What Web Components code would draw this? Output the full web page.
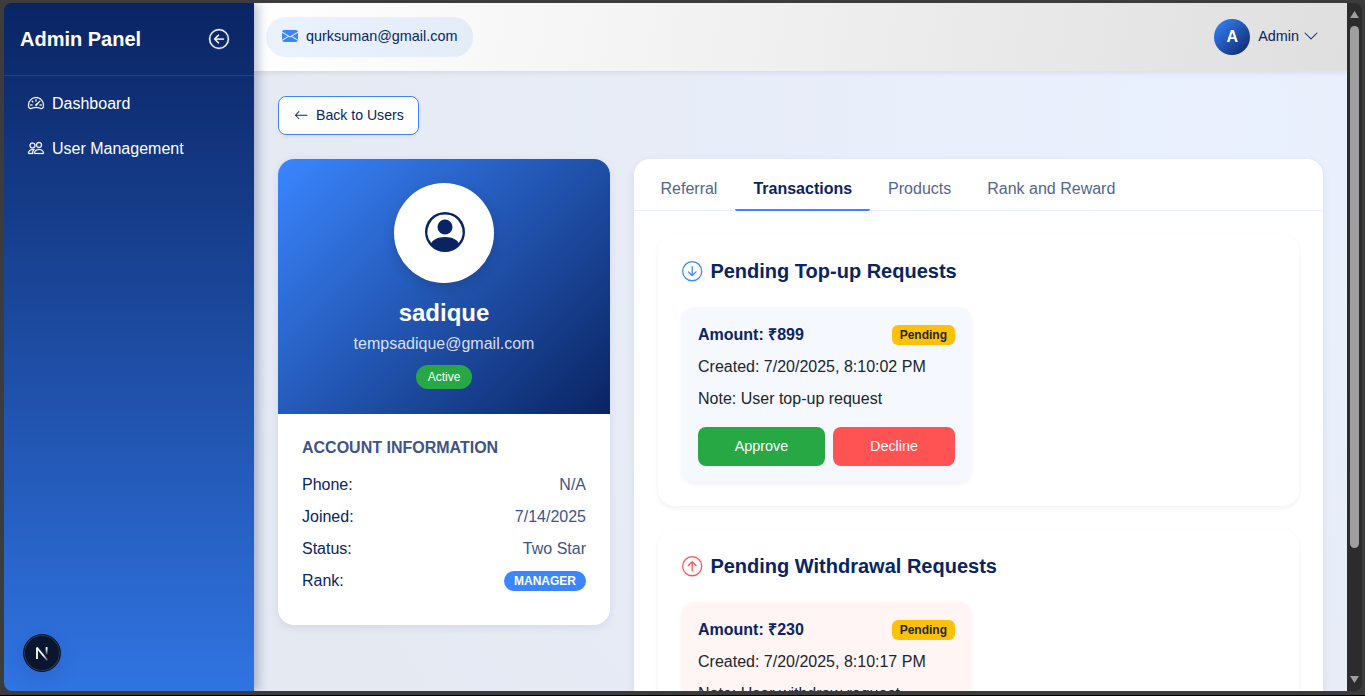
<!DOCTYPE html>
<html lang="en">
<head>
<meta charset="utf-8">
<title>Admin Panel</title>
<style>
html,body{margin:0;height:100%;overflow:hidden;background:#3c3c3c}
body{font:16px/24px "Liberation Sans",Arial,sans-serif;color:#212529}
</style>
</head>
<body>
<admin-app></admin-app>
<script>
const ICONS = {
  back: '<path fill-rule="evenodd" d="M1 8a7 7 0 1 0 14 0A7 7 0 0 0 1 8m15 0A8 8 0 1 1 0 8a8 8 0 0 1 16 0m-4.500-.5a.5.5 0 0 1 0 1H5.707l2.147 2.146a.5.5 0 0 1-.708.708l-3-3a.5.5 0 0 1 0-.708l3-3a.5.5 0 1 1 .708.708L5.707 7.500z" stroke="currentColor" stroke-width=".25"/>',
  gauge: '<path d="M8 4a.5.5 0 0 1 .5.5V6a.5.5 0 0 1-1 0V4.500A.5.5 0 0 1 8 4M3.732 5.732a.5.5 0 0 1 .707 0l.915.914a.5.5 0 1 1-.708.708l-.914-.915a.5.5 0 0 1 0-.707M2 10a.5.5 0 0 1 .5-.5h1.586a.5.5 0 0 1 0 1H2.500A.5.5 0 0 1 2 10m9.500 0a.5.5 0 0 1 .5-.5h1.500a.5.5 0 0 1 0 1H12a.5.5 0 0 1-.5-.5m.754-4.246a.39.39 0 0 0-.527-.02L7.547 9.310a.91.91 0 1 0 1.302 1.258l3.434-4.297a.39.39 0 0 0-.029-.518z" stroke="currentColor" stroke-width=".25"/><path fill-rule="evenodd" d="M0 10a8 8 0 1 1 15.547 2.661c-.442 1.253-1.845 1.602-2.932 1.250C11.309 13.488 9.475 13 8 13c-1.474 0-3.310.488-4.615.911-1.087.352-2.490.003-2.932-1.250A8 8 0 0 1 0 10m8-7a7 7 0 0 0-6.603 9.329c.203.575.923.876 1.680.63C4.397 12.533 6.358 12 8 12s3.604.532 4.923.96c.757.245 1.477-.056 1.680-.631A7 7 0 0 0 8 3" stroke="currentColor" stroke-width=".25"/>',
  people: '<path d="M15 14s1 0 1-1-1-4-5-4-5 3-5 4 1 1 1 1zm-7.978-1L7 12.996c.001-.264.167-1.030.76-1.720C8.312 10.629 9.282 10 11 10c1.717 0 2.687.63 3.240 1.276.593.69.758 1.457.76 1.720l-.008.002-.014.002zM11 7a2 2 0 1 0 0-4 2 2 0 0 0 0 4m3-2a3 3 0 1 1-6 0 3 3 0 0 1 6 0M6.936 9.280a6 6 0 0 0-1.230-.247A7 7 0 0 0 5 9c-4 0-5 3-5 4q0 1 1 1h4.216A2.240 2.240 0 0 1 5 13c0-1.010.377-2.042 1.090-2.904.243-.294.526-.569.846-.816M4.920 10A5.500 5.500 0 0 0 4 13H1c0-.26.164-1.030.76-1.724.545-.636 1.492-1.256 3.160-1.275ZM1.500 5.500a3 3 0 1 1 6 0 3 3 0 0 1-6 0m3-2a2 2 0 1 0 0 4 2 2 0 0 0 0-4" stroke="currentColor" stroke-width=".25"/>',
  mail: '<path d="M.05 3.555A2 2 0 0 1 2 2h12a2 2 0 0 1 1.950 1.555L8 8.414zM0 4.697v7.104l5.803-3.558zM6.761 8.830l-6.570 4.027A2 2 0 0 0 2 14h12a2 2 0 0 0 1.808-1.144l-6.570-4.027L8 9.586zm3.436-.586L16 11.801V4.697z"/>',
  left: '<path fill-rule="evenodd" d="M15 8a.5.5 0 0 0-.5-.5H2.707l3.147-3.146a.5.5 0 1 0-.708-.708l-4 4a.5.5 0 0 0 0 .708l4 4a.5.5 0 0 0 .708-.708L2.707 8.500H14.500A.5.5 0 0 0 15 8"/>',
  chevron: '<path fill-rule="evenodd" d="M1.646 4.646a.5.5 0 0 1 .708 0L8 10.293l5.646-5.647a.5.5 0 0 1 .708.708l-6 6a.5.5 0 0 1-.708 0l-6-6a.5.5 0 0 1 0-.708"/>',
  person: '<path d="M11 6a3 3 0 1 1-6 0 3 3 0 0 1 6 0"/><path fill-rule="evenodd" d="M0 8a8 8 0 1 1 16 0A8 8 0 0 1 0 8m8-7a7 7 0 0 0-5.468 11.370C3.242 11.226 4.805 10 8 10s4.757 1.225 5.468 2.370A7 7 0 0 0 8 1"/>',
  down: '<path fill-rule="evenodd" d="M1 8a7 7 0 1 0 14 0A7 7 0 0 0 1 8m15 0A8 8 0 1 1 0 8a8 8 0 0 1 16 0M8.500 4.500a.5.5 0 0 0-1 0v5.793L5.354 8.146a.5.5 0 1 0-.708.708l3 3a.5.5 0 0 0 .708 0l3-3a.5.5 0 0 0-.708-.708L8.500 10.293z"/>',
  up: '<path fill-rule="evenodd" d="M1 8a7 7 0 1 0 14 0A7 7 0 0 0 1 8m15 0A8 8 0 1 1 0 8a8 8 0 0 1 16 0m-7.500 3.500a.5.5 0 0 1-1 0V5.707L5.354 7.854a.5.5 0 1 1-.708-.708l3-3a.5.5 0 0 1 .708 0l3 3a.5.5 0 0 1-.708.708L8.500 5.707z"/>'
};

function define(name, html) {
  customElements.define(name, class extends HTMLElement {
    constructor() {
      super();
      const t = document.createElement('template');
      t.innerHTML = typeof html === 'function' ? html(this) : html;
      this.attachShadow({ mode: 'open' }).append(t.content.cloneNode(true));
    }
  });
}

define('ui-icon', el => `<style>:host{display:block;flex:none;width:var(--size,16px);height:var(--size,16px)}svg{display:block;width:100%;height:100%;overflow:visible}</style>
<svg viewBox="0 0 16 16" fill="currentColor">${ICONS[el.getAttribute('name')]}</svg>`);

define('nav-item', el => `<style>
:host{display:flex;align-items:center;gap:8px;height:45px;padding-left:24px;color:#fff}ui-icon{margin-bottom:1px}</style>
<ui-icon name="${el.getAttribute('icon')}"></ui-icon><slot></slot>`);

define('side-bar', `<style>
:host{display:flex;flex-direction:column;width:250px;flex:none;box-sizing:border-box;background:linear-gradient(#0a2463,#3074e2);color:#fff;box-shadow:4px 0 10px rgba(10,36,99,.3);z-index:2;position:relative}
header{display:flex;align-items:center;justify-content:space-between;height:72px;padding:0 25px 0 16px;border-bottom:1px solid rgba(255,255,255,.1)}
h1{margin:0;font-size:20px;line-height:24px}
nav{padding-top:5px}
dev-badge{position:absolute;left:19px;bottom:19px}
</style>
<header><h1>Admin Panel</h1><ui-icon name="back" style="--size:20px"></ui-icon></header>
<nav><nav-item icon="gauge">Dashboard</nav-item><nav-item icon="people">User Management</nav-item></nav>
<dev-badge></dev-badge>`);

define('dev-badge', `<style>
:host{display:flex;width:38px;height:38px;border-radius:50%;box-sizing:border-box;align-items:center;justify-content:center;background:#0a162f;border:1px solid #08152f;box-shadow:inset 0 0 0 1px #2c3a54,0 8px 20px rgba(10,36,99,.12)}</style>
<svg width="14" height="16" viewBox="0 0 14 16" fill="none" stroke-width="1.8"><defs><linearGradient id="a" x1="0" y1="0" x2="0" y2="1"><stop offset=".2" stop-color="#fff"/><stop offset="1" stop-color="#fff" stop-opacity="0"/></linearGradient><linearGradient id="b" x1="0" y1="0" x2="1" y2="1"><stop offset=".6" stop-color="#fff"/><stop offset="1" stop-color="#fff" stop-opacity=".3"/></linearGradient></defs><path d="M2 14V2.600" stroke="#fff"/><path d="M1.900 2.600 12.300 15.200" stroke="url(#b)"/><rect x="10.700" y="2" width="1.800" height="8.500" fill="url(#a)"/></svg>`);

define('top-bar', `<style>
:host{display:flex;align-items:center;justify-content:space-between;height:68px;flex:none;box-sizing:border-box;padding:0 28px 0 12px;background:linear-gradient(100deg,#fff,#dfdfdf);box-shadow:0 2px 5px rgba(0,0,0,.08);position:relative;z-index:1;font-size:14.400px;color:#0a2463}
.mail{display:flex;align-items:center;gap:8px;height:40px;padding:0 16px;border-radius:20px;background:linear-gradient(90deg,#e9f2fe,#e4ecf8)}
.mail ui-icon{color:#3a86ff;margin-bottom:2px}
.user{display:flex;align-items:center;gap:8px}
.user ui-icon{margin:0 0 2px -4px}
.av{width:36px;height:36px;border-radius:50%;background:linear-gradient(135deg,#3a86ff,#0a2463);color:#fff;font:bold 16px/36px "Liberation Sans",Arial,sans-serif;text-align:center}
.t{position:relative;top:-1px}
</style>
<div class="mail"><ui-icon name="mail"></ui-icon><span class="t">qurksuman@gmail.com</span></div>
<div class="user"><div class="av">A</div><span class="t">Admin</span><ui-icon name="chevron"></ui-icon></div>`);

define('back-button', `<style>
:host{display:flex;align-items:center;gap:7.600px;width:141px;height:39px;box-sizing:border-box;padding:0 0 1px 15px;white-space:nowrap;border:1px solid #3a86ff;border-radius:8px;background:#fff;color:#0a2463;font-size:14.100px;box-shadow:0 2px 5px rgba(0,0,0,.04)}
ui-icon{margin-top:1px}</style>
<ui-icon name="left" style="--size:14.400px"></ui-icon><slot></slot>`);

define('info-row', `<style>:host{display:flex;justify-content:space-between;align-items:center;height:24px;margin-bottom:8px;color:#0a2463}.v{color:#3e5488}</style>
<span><slot name="label"></slot></span><span class="v"><slot></slot></span>`);

define('profile-card', `<style>
:host{display:block;width:332px;height:466px;flex:none;border-radius:16px;overflow:hidden;background:#fff;box-shadow:0 2px 8px rgba(10,36,99,.09)}
.top{height:255px;box-sizing:border-box;padding-top:24px;display:flex;flex-direction:column;align-items:center;background:linear-gradient(135deg,#3a86ff,#0a2463);color:#fff}
.av{width:100px;height:100px;border-radius:50%;background:#fff;color:#0a2463;display:flex;align-items:center;justify-content:center;box-shadow:0 4px 12px rgba(0,0,0,.15)}
.av ui-icon{margin:0 0 3px 1px}
h2{margin:16px 0 5px;font-size:24px;line-height:28px}
.mail{color:rgba(255,255,255,.84);margin-bottom:9px}
.st{height:24px;padding:0 12px;border-radius:12px;background:#28a745;font-size:12px;line-height:24px}
.body{padding:22px 24px}
h3{margin:0 0 13px;font-size:16px;line-height:24px;color:#3e5488}
.rank{display:block;height:20px;padding:0 10px;border-radius:10px;background:#3a86ff;color:#fff;font:bold 12px/20px "Liberation Sans",Arial,sans-serif}
</style>
<div class="top"><div class="av"><ui-icon name="person" style="--size:40px"></ui-icon></div><h2>sadique</h2><div class="mail">tempsadique@gmail.com</div><div class="st">Active</div></div>
<div class="body"><h3>ACCOUNT INFORMATION</h3>
<info-row><span slot="label">Phone:</span>N/A</info-row>
<info-row><span slot="label">Joined:</span>7/14/2025</info-row>
<info-row><span slot="label">Status:</span>Two Star</info-row>
<info-row><span slot="label">Rank:</span><span class="rank">MANAGER</span></info-row></div>`);

define('tab-item', `<style>
:host{display:block;height:52px;box-sizing:border-box;padding:0 18px;line-height:59px;color:#54658f}
:host([active]){color:#0a2463;font-weight:bold;border-bottom:2px solid #3a86ff;border-radius:2px}</style><slot></slot>`);

define('request-card', el => `<style>
:host{display:block;width:289px;box-sizing:border-box;padding:16px;border-radius:12px;background:var(--tint);box-shadow:0 2px 5px rgba(0,0,0,.06)}
.row{display:flex;justify-content:space-between;align-items:center}
b{color:#0a2463}
.tag{height:20px;padding:0 8px;border-radius:6px;background:#ffc107;color:#212529;font:bold 12px/20px "Liberation Sans",Arial,sans-serif}
.l{margin-top:8px}
.btns{display:grid;grid-template-columns:127px 122px;gap:8px;margin-top:16px}
.btns div{height:39px;border-radius:8px;background:#28a745;color:#fff;text-align:center;font-size:14.400px;line-height:38px}
.btns .no{background:#ff5252}
</style>
<div class="row"><b>Amount: ${el.getAttribute('amount')}</b><span class="tag">Pending</span></div>
<div class="l">Created: ${el.getAttribute('created')}</div><div class="l">Note: <slot></slot></div>
<div class="btns"><div>Approve</div><div class="no">Decline</div></div>`);

define('request-section', el => `<style>
:host{display:block;padding:24px;border-radius:16px;background:#fff;box-shadow:0 2px 5px rgba(0,0,0,.06);margin-bottom:24px}
h2{display:flex;align-items:center;gap:8px;margin:0 0 24px;font-size:20px;line-height:24px;color:#0a2463}
ui-icon{--size:20.400px;color:var(--accent)}</style>
<h2><ui-icon name="${el.getAttribute('icon')}"></ui-icon>${el.getAttribute('heading')}</h2><slot></slot>`);

define('detail-card', `<style>
:host{display:block;width:689px;height:800px;flex:none;border-radius:16px;background:#fff;box-shadow:0 2px 8px rgba(10,36,99,.08)}
.tabs{display:flex;height:51px;padding-left:8.500px;border-bottom:1px solid #e6f0ff}
.body{padding:24px}
</style>
<div class="tabs"><tab-item>Referral</tab-item><tab-item active>Transactions</tab-item><tab-item>Products</tab-item><tab-item>Rank and Reward</tab-item></div>
<div class="body">
<request-section icon="down" heading="Pending Top-up Requests" style="--accent:#3a86ff"><request-card amount="₹899" created="7/20/2025, 8:10:02 PM" style="--tint:#f5f8ff">User top-up request</request-card></request-section>
<request-section icon="up" heading="Pending Withdrawal Requests" style="--accent:#ff5252"><request-card amount="₹230" created="7/20/2025, 8:10:17 PM" style="--tint:#fff5f5">User withdraw request</request-card></request-section>
</div>`);

define('scroll-bar', `<style>
:host{display:flex;flex-direction:column;align-items:center;width:15px;flex:none;background:#2c2c2c;box-sizing:border-box;padding:8px 0}
i{width:9px;height:7px;background:#9f9f9f;clip-path:polygon(50% 0,100% 100%,0 100%)}
.d{clip-path:polygon(0 0,100% 0,50% 100%);margin-top:auto}
b{width:9px;height:522px;margin-top:8px;border-radius:5px;background:#9f9f9f}</style><i></i><b></b><i class="d"></i>`);

define('admin-app', `<style>
:host{display:block;height:696px;box-sizing:border-box;padding:3px 3px 0 4px;border-bottom:1px solid #000}
.win{display:flex;height:688px;border-radius:8px;overflow:hidden;background:#2c2c2c}
.main{flex:1;min-width:0;display:flex;flex-direction:column;overflow:hidden;background:radial-gradient(circle at 950px 120px,#eaf1fe,#e5e9f2 1000px)}
.content{flex:1;min-height:0;padding:25px 24px 0;overflow:hidden}
.cols{display:flex;gap:24px;align-items:flex-start;margin-top:24px}
</style>
<div class="win"><side-bar></side-bar>
<div class="main"><top-bar></top-bar><div class="content"><back-button>Back to Users</back-button>
<div class="cols"><profile-card></profile-card><detail-card></detail-card></div></div></div>
<scroll-bar></scroll-bar></div>`);
</script>
</body>
</html>
